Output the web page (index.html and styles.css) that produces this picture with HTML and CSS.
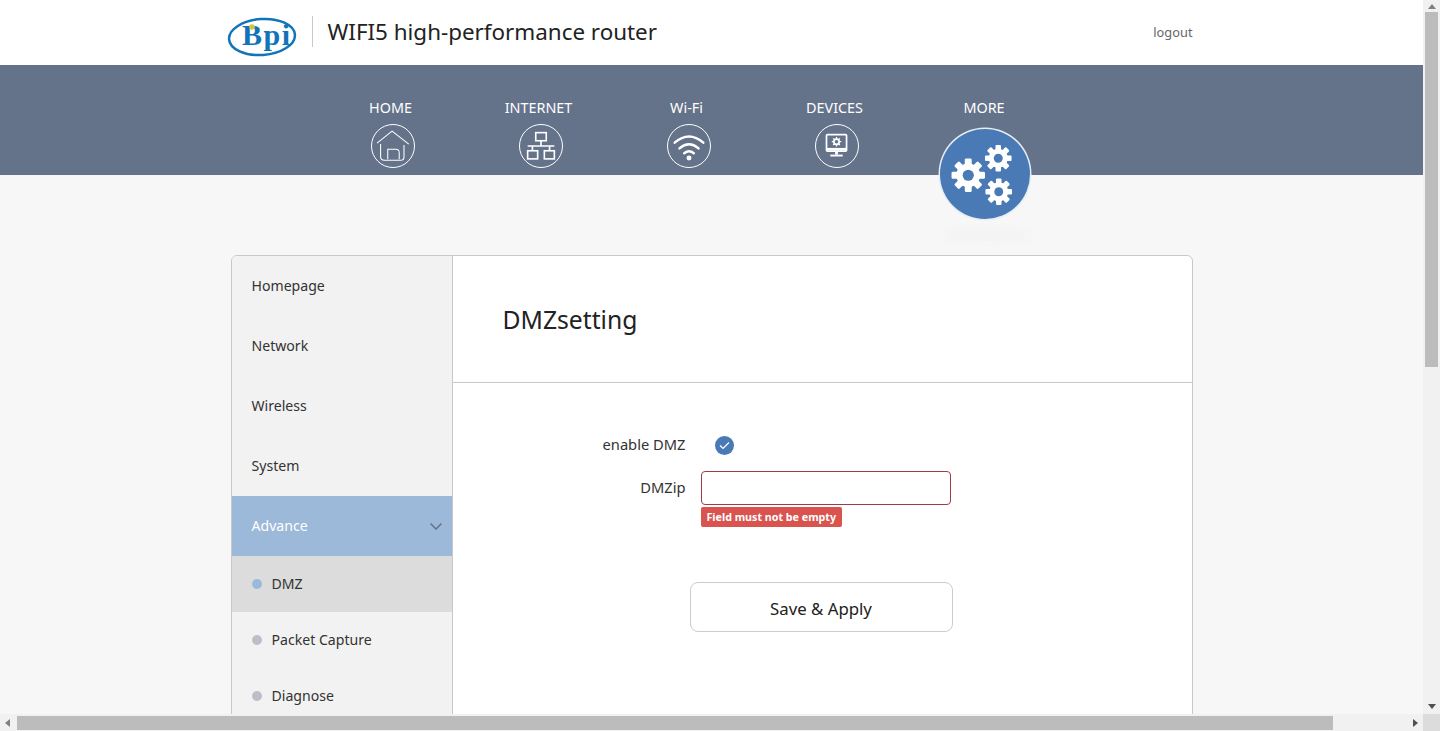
FILE: index.html
```html
<!DOCTYPE html>
<html>
<head>
<title>WIFI5 high-performance router</title>
<link rel="stylesheet" href="styles.css">
</head>
<body>
<svg class="defs" width="0" height="0">
  <symbol id="gear" viewBox="-16 -16 32 32">
    <g fill="#fff">
      <rect x="-3.2" y="-15.500" width="6.400" height="31" rx="1.200"/>
      <rect x="-3.2" y="-15.500" width="6.400" height="31" rx="1.200" transform="rotate(45)"/>
      <rect x="-3.2" y="-15.500" width="6.400" height="31" rx="1.200" transform="rotate(90)"/>
      <rect x="-3.2" y="-15.500" width="6.400" height="31" rx="1.200" transform="rotate(135)"/>
    </g>
    <circle r="8" fill="none" stroke="#fff" stroke-width="6"/>
    <circle r="5.200" fill="#4a7ab5"/>
  </symbol>
</svg>
<div class="window">
  <div class="viewport">
    <header class="top">
      <div class="wrap top-inner">
        <svg class="logo" width="70" height="44" viewBox="0 0 70 44">
          <ellipse cx="35" cy="23" rx="33" ry="18" fill="none" stroke="#1274b8" stroke-width="2.500" transform="rotate(-4 35 23)"/>
          <text x="15" y="31" class="logo-text">Bpi</text>
          <circle cx="25" cy="13" r="2.800" fill="#d8c43c"/>
        </svg>
        <span class="top-sep"></span>
        <span class="top-title">WIFI5 high-performance router</span>
        <a class="logout">logout</a>
      </div>
    </header>

    <nav class="nav">
      <div class="wrap nav-inner">
        <div class="nav-item">
          <span class="nav-label">HOME</span>
          <span class="nav-icon">
            <svg width="44" height="44" viewBox="0 0 44 44" fill="none" stroke="#fff" stroke-width="1.100">
              <path d="M5.300 19 21 6.500l17.500 13.500"/>
              <path d="M9 20v13q0 4 4 4h17q3.500 0 3.500-3.500V21"/>
              <path d="M16.500 36V25.500H25q3.500 0 3.500 3.500v7"/>
            </svg>
          </span>
        </div>
        <div class="nav-item">
          <span class="nav-label">INTERNET</span>
          <span class="nav-icon">
            <svg width="44" height="44" viewBox="0 0 44 44" fill="none" stroke="#fff" stroke-width="1.700">
              <rect x="16.500" y="8" width="11" height="8.500"/>
              <path d="M22 16.500V22M8 22h28M13 22v5M31 22v5"/>
              <rect x="8" y="27" width="10.500" height="8.500"/>
              <rect x="25.500" y="27" width="10.500" height="8.500"/>
            </svg>
          </span>
        </div>
        <div class="nav-item">
          <span class="nav-label">Wi-Fi</span>
          <span class="nav-icon">
            <svg width="44" height="44" viewBox="0 0 44 44" fill="none" stroke="#fff" stroke-width="2.600" stroke-linecap="round">
              <path d="M7 18.500q15-13 30 0"/>
              <path d="M12 24.500q10-8.500 20 0"/>
              <path d="M17 29.500q5-4 10 0"/>
              <circle cx="22" cy="34.500" r="1.300" fill="#fff"/>
            </svg>
          </span>
        </div>
        <div class="nav-item">
          <span class="nav-label">DEVICES</span>
          <span class="nav-icon">
            <svg width="44" height="44" viewBox="0 0 44 44" fill="none" stroke="#fff" stroke-width="1.800">
              <rect x="11" y="10" width="21" height="17.500" rx="1"/>
              <path d="M11 25.500h21" stroke-width="3"/>
              <path d="M21.500 28v3" stroke-width="3"/>
              <path d="M15 32h13" stroke-width="2"/>
              <circle cx="21.500" cy="17.500" r="2.800" stroke-width="1.800"/>
              <path d="M21.500 12.500v2.500M21.500 20v2.500M16.500 17.500H19M24 17.500h2.500M18 14l1.700 1.700M23.300 19.300 25 21M18 21l1.700-1.700M23.300 15.700 25 14" stroke-width="1.400"/>
            </svg>
          </span>
        </div>
        <div class="nav-item nav-item-active">
          <span class="nav-label">MORE</span>
          <span class="nav-bubble">
            <svg width="90" height="90" viewBox="0 0 90 90">
              <use href="#gear" x="11" y="29" width="34.500" height="34.500"/>
              <use href="#gear" x="44.500" y="15.500" width="27.500" height="27.500"/>
              <use href="#gear" x="45" y="49" width="27.500" height="27.500"/>
            </svg>
          </span>
          <span class="nav-shadow"></span>
        </div>
      </div>
    </nav>

    <main class="wrap panel">
      <aside class="side">
        <a class="side-item">Homepage</a>
        <a class="side-item">Network</a>
        <a class="side-item">Wireless</a>
        <a class="side-item">System</a>
        <a class="side-item side-open">
          Advance
          <svg width="12" height="7" viewBox="0 0 12 7" fill="none" stroke="#64728a" stroke-width="1.500"><path d="M.5.5l5.500 5.500L11.500.5"/></svg>
        </a>
        <a class="sub-item sub-current"><i class="dot"></i>DMZ</a>
        <a class="sub-item"><i class="dot"></i>Packet Capture</a>
        <a class="sub-item"><i class="dot"></i>Diagnose</a>
      </aside>
      <section class="content">
        <h1 class="content-title">DMZsetting</h1>
        <form class="form">
          <div class="row row-check">
            <label class="row-label">enable DMZ</label>
            <span class="check">
              <svg width="11" height="9" viewBox="0 0 11 9" fill="none" stroke="#fff" stroke-width="1.200"><path d="M1 4.500l3 3 6-6"/></svg>
            </span>
          </div>
          <div class="row row-input">
            <label class="row-label row-label-input">DMZip</label>
            <div class="field">
              <input class="text-input" type="text">
              <span class="error">Field must not be empty</span>
            </div>
          </div>
          <button class="save" type="button">Save &amp; Apply</button>
        </form>
      </section>
    </main>
  </div>

  <div class="vbar">
    <i class="arrow arrow-up"></i>
    <span class="vthumb"></span>
    <i class="arrow arrow-down"></i>
  </div>
  <div class="hbar">
    <i class="arrow arrow-left"></i>
    <span class="hthumb"></span>
    <i class="arrow arrow-right"></i>
  </div>
  <div class="corner"></div>
</div>
</body>
</html>
```

FILE: styles.css
```css
html, body {
  margin: 0;
  height: 100%;
  overflow: hidden;
}

body {
  font-family: "Noto Sans", "Open Sans", sans-serif;
  color: #333;
  background: #f7f7f7;
}

.defs {
  position: absolute;
}

.window {
  display: grid;
  grid-template-columns: 1fr 17px;
  grid-template-rows: 1fr 17px;
  height: 100vh;
}

.viewport {
  overflow: hidden;
  min-width: 0;
  min-height: 0;
}

.wrap {
  width: 962px;
  margin: 0 auto;
}

/* header */
.top {
  height: 65px;
  background: #fff;
}

.top-inner {
  display: flex;
  align-items: center;
  height: 65px;
  padding-bottom: 2px;
  box-sizing: border-box;
}

.logo {
  margin: 0 0 -9px -4px;
  flex: none;
}

.logo-text {
  font-family: "Liberation Serif", serif;
  font-size: 30px;
  font-weight: 700;
  letter-spacing: 1.500px;
  fill: #1274b8;
}

.top-sep {
  width: 1px;
  height: 31px;
  margin: 0 15px;
  background: #c9c9c9;
}

.top-title {
  font-size: 22.400px;
  color: #222;
}

.logout {
  margin-left: auto;
  font-size: 12.800px;
  color: #666;
}

/* nav */
.nav {
  height: 110px;
  background: #64728a;
}

.nav-inner {
  display: flex;
  padding-left: 88px;
  box-sizing: border-box;
}

.nav-item {
  position: relative;
  width: 148px;
  display: flex;
  flex-direction: column;
  align-items: center;
  padding-top: 33px;
}

.nav-label {
  font-size: 14.400px;
  line-height: 20px;
  color: #fff;
  margin-left: -4px;
}

.nav-icon {
  width: 44px;
  height: 44px;
  margin-top: 6px;
  border: 1px solid #fff;
  border-radius: 50%;
  box-sizing: border-box;
  display: flex;
  align-items: center;
  justify-content: center;
}

.nav-item-active .nav-label {
  margin-left: -1px;
}

.nav-bubble {
  position: absolute;
  z-index: 2;
  left: 29.500px;
  top: 64px;
  width: 90px;
  height: 90px;
  border-radius: 50%;
  background: #4a7ab5;
  box-shadow: 0 0 0 1.500px #e6edf5;
}

.nav-shadow {
  position: absolute;
  left: 34px;
  top: 167px;
  width: 84px;
  height: 6px;
  border-radius: 50%;
  background: #efefef;
  filter: blur(5px);
}

/* panel */
.panel {
  display: flex;
  margin-top: 80px;
  min-height: 600px;
  background: #fff;
  border: 1px solid #c8c8c8;
  border-radius: 6px;
  box-sizing: border-box;
  overflow: hidden;
}

.side {
  width: 221px;
  flex: none;
  background: #f2f2f2;
  border-right: 1px solid #c8c8c8;
  box-sizing: border-box;
}

.side-item {
  display: flex;
  align-items: center;
  justify-content: space-between;
  height: 60px;
  padding: 0 10px 2px 20px;
  box-sizing: border-box;
  font-size: 14.100px;
  color: #333;
}

.side-open {
  padding-bottom: 0;
  line-height: 58px;
  background: #9db9d9;
  color: #fff;
}

.sub-item {
  display: flex;
  align-items: center;
  height: 56px;
  padding-left: 20px;
  font-size: 14.100px;
  line-height: 54px;
  color: #333;
}

.sub-current {
  background: #dcdcdc;
}

.dot {
  width: 10px;
  height: 10px;
  margin-right: 10px;
  border-radius: 50%;
  background: #bcbec8;
}

.sub-current .dot {
  background: #9db9d9;
}

.content {
  flex: 1;
}

.content-title {
  height: 127px;
  margin: 0;
  padding-left: 50px;
  display: flex;
  align-items: center;
  font-size: 24.700px;
  font-weight: 400;
  color: #222;
  border-bottom: 1px solid #c8c8c8;
  box-sizing: border-box;
}

.form {
  padding-top: 51px;
}

.row {
  display: flex;
}

.row-check {
  align-items: center;
  height: 22px;
  margin-bottom: 15px;
}

.row-check .row-label {
  margin-top: -2px;
}

.row-label {
  width: 233px;
  text-align: right;
  font-size: 14.700px;
  color: #333;
}

.row-label-input {
  line-height: 32px;
}

.check {
  width: 19px;
  height: 19px;
  margin-left: 29px;
  border-radius: 50%;
  background: #4a7ab5;
  display: flex;
  align-items: center;
  justify-content: center;
}

.field {
  margin-left: 15px;
  display: flex;
  flex-direction: column;
  align-items: flex-start;
}

.text-input {
  width: 250px;
  height: 34px;
  padding: 0 8px;
  border: 1px solid #a03a44;
  border-radius: 4px;
  background: #fff;
  box-sizing: border-box;
}

.error {
  margin-top: 2px;
  height: 20px;
  line-height: 20px;
  padding: 0 6px;
  border-radius: 2px;
  background: #d9534f;
  color: #fff;
  font-size: 10.700px;
  font-weight: 700;
}

.save {
  display: block;
  width: 263px;
  height: 50px;
  margin: 55px 0 0 237px;
  padding: 3px 0 0;
  background: #fff;
  border: 1px solid #ccc;
  border-radius: 8px;
  font-family: inherit;
  font-size: 16.800px;
  color: #222;
}

/* scrollbars */
.vbar {
  background: #f1f1f1;
  display: flex;
  flex-direction: column;
  align-items: center;
  justify-content: space-between;
  min-height: 0;
}

.vthumb {
  width: 13px;
  height: 355px;
  margin: 0 0 auto;
  background: #bcbcbc;
}

.hbar {
  background: #f1f1f1;
  display: flex;
  align-items: center;
}

.hthumb {
  width: 1316px;
  height: 14px;
  background: #bcbcbc;
}

.corner {
  background: #dcdcdc;
}

.arrow {
  width: 0;
  height: 0;
  border: 4px solid transparent;
  flex: none;
}

.arrow-up {
  margin: 4px 0 3px;
  border-top: 0;
  border-bottom: 5px solid #808080;
}

.arrow-down {
  margin-bottom: 5px;
  border-bottom: 0;
  border-top: 5px solid #505050;
}

.arrow-left {
  margin: 0 7px 0 5px;
  border-left: 0;
  border-right: 5px solid #808080;
}

.arrow-right {
  margin-left: auto;
  margin-right: 5px;
  border-right: 0;
  border-left: 5px solid #505050;
}
```
